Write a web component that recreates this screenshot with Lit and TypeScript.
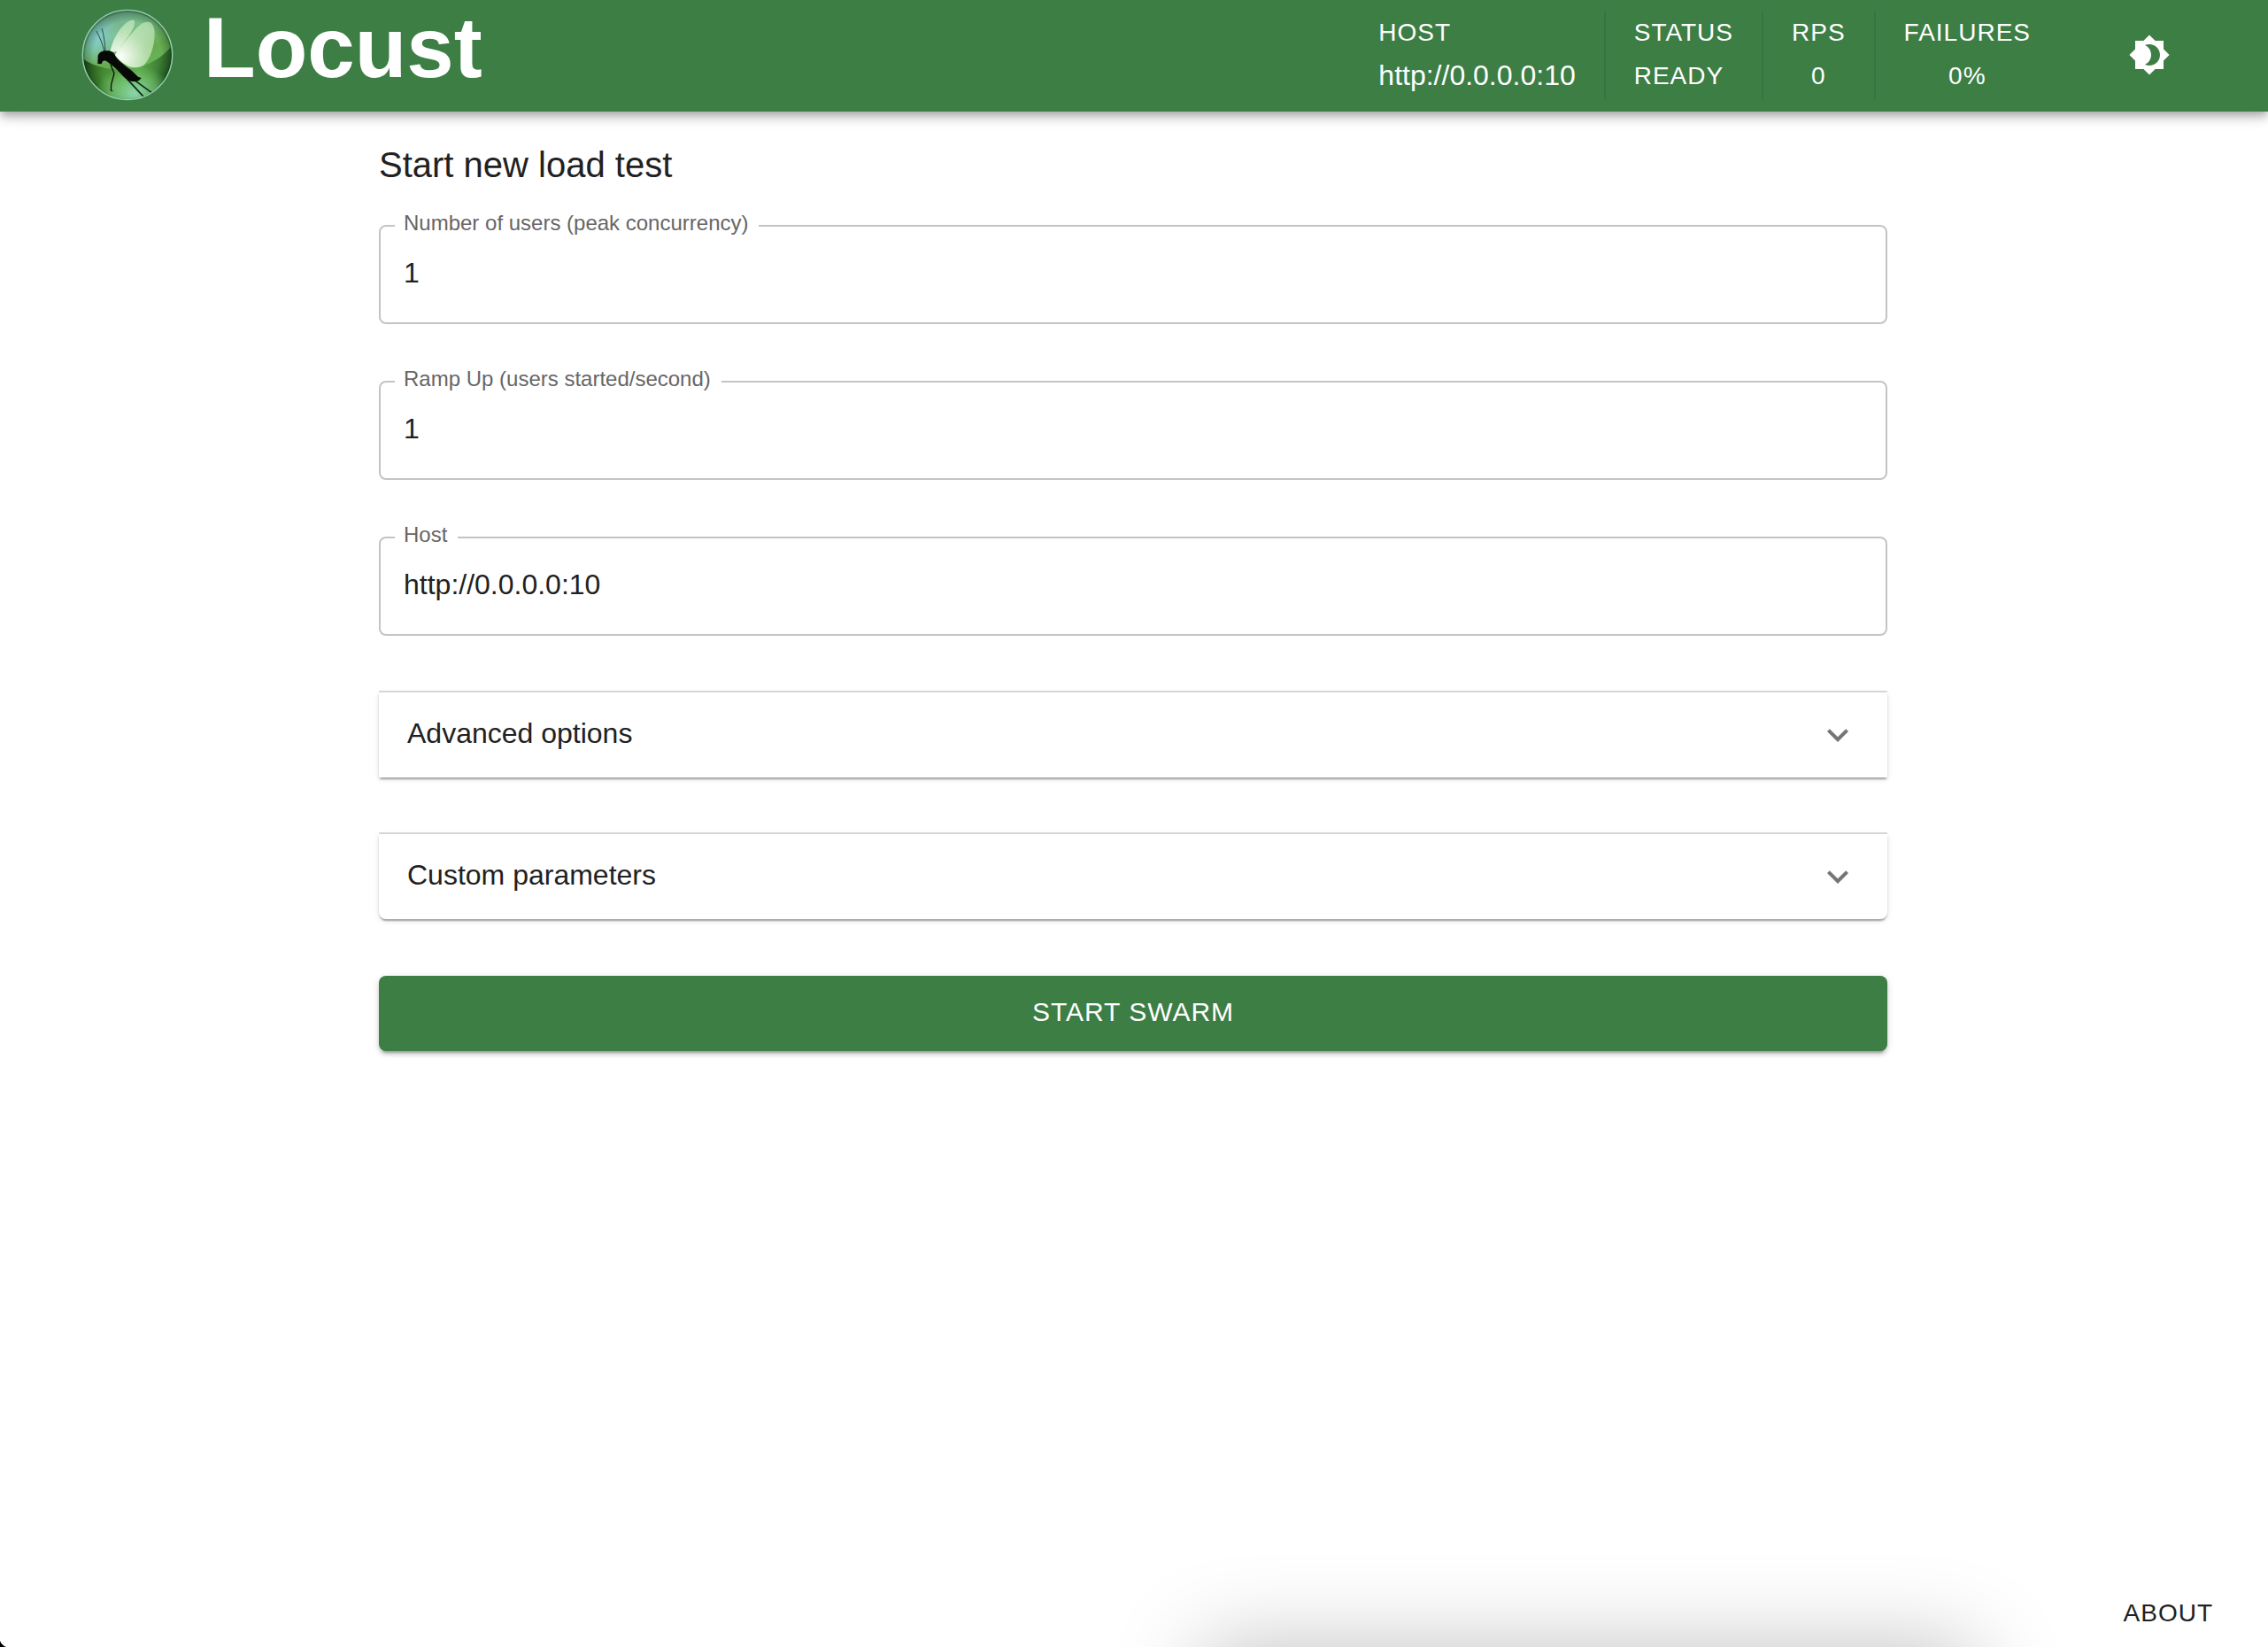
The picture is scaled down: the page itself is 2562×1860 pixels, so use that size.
import { LitElement, css, html, svg } from "lit";
import { customElement, property, state } from "lit/decorators.js";

const FONT = css`"Liberation Sans", Helvetica, Arial, sans-serif`;

/** Round glass badge with the insect silhouette. */
@customElement("locust-logo")
class LocustLogo extends LitElement {
  static styles = css`
    :host {
      display: block;
    }
    .badge {
      display: block;
      width: 104px;
      height: 104px;
    }
  `;

  render() {
    return html`
      <svg class="badge" viewBox="36 29 312 312" role="img" aria-label="Locust logo">
        <defs>
          <linearGradient id="glass" x1="0.2" y1="0" x2="0.6" y2="1">
            <stop offset="0" stop-color="#6fa59b" />
            <stop offset="0.3" stop-color="#7cbf86" />
            <stop offset="0.55" stop-color="#67ab50" />
            <stop offset="1" stop-color="#6cc06a" />
          </linearGradient>
          <radialGradient id="rim" cx="0.5" cy="0.5" r="0.5">
            <stop offset="0.76" stop-color="#0c3a10" stop-opacity="0" />
            <stop offset="0.94" stop-color="#0c3a10" stop-opacity="0.28" />
            <stop offset="1" stop-color="#062408" stop-opacity="0.65" />
          </radialGradient>
          <linearGradient id="lower" x1="0" y1="0.1" x2="1" y2="0.2">
            <stop offset="0" stop-color="#04200a" stop-opacity="0.9" />
            <stop offset="0.3" stop-color="#2a6c18" stop-opacity="0.5" />
            <stop offset="0.65" stop-color="#3f9428" stop-opacity="0.35" />
            <stop offset="1" stop-color="#0b3310" stop-opacity="0.75" />
          </linearGradient>
          <radialGradient id="glow" cx="0.5" cy="0.5" r="0.5">
            <stop offset="0" stop-color="#8ed8ae" stop-opacity="0.95" />
            <stop offset="0.6" stop-color="#78c879" stop-opacity="0.6" />
            <stop offset="1" stop-color="#78c860" stop-opacity="0" />
          </radialGradient>
          <radialGradient id="sheen" cx="0.5" cy="0.5" r="0.5">
            <stop offset="0" stop-color="#84cfd8" stop-opacity="0.85" />
            <stop offset="1" stop-color="#84cfd8" stop-opacity="0" />
          </radialGradient>
          <radialGradient id="wing" gradientUnits="userSpaceOnUse" cx="168" cy="192" r="130">
            <stop offset="0" stop-color="#ffffff" />
            <stop offset="0.22" stop-color="#f2fbee" stop-opacity="0.9" />
            <stop offset="0.7" stop-color="#d3efcb" stop-opacity="0.7" />
            <stop offset="1" stop-color="#cdeec6" stop-opacity="0.62" />
          </radialGradient>
          <clipPath id="disc"><circle cx="192" cy="185" r="150" /></clipPath>
        </defs>
        <circle cx="192" cy="185" r="150" fill="url(#glass)" />
        <g clip-path="url(#disc)">
          <ellipse cx="85" cy="125" rx="90" ry="95" fill="url(#sheen)" />
          <circle cx="192" cy="185" r="151" fill="url(#rim)" />
          <path
            d="M36 195 C90 232 140 236 200 231 C265 224 315 190 345 150 V345 H36 Z"
            fill="url(#lower)"
          />
          <ellipse cx="215" cy="315" rx="130" ry="95" fill="url(#glow)" />
        </g>
        <path
          d="M133 176 C141 128 176 74 207 67 C219 65 219 77 213 91 C200 120 172 151 157 174 Z"
          fill="url(#wing)"
        />
        <path
          d="M156 174 C184 139 217 94 243 78 C265 66 279 77 283 99 C287 134 277 186 252 215 C236 235 201 229 184 217 C169 207 150 190 150 184 Z"
          fill="url(#wing)"
        />
        <g fill="none" stroke="#111" stroke-linecap="round" stroke-linejoin="round">
          <path d="M114 174 C108 148 98 124 87 105" stroke-width="3" stroke="#2d4a42" />
          <path d="M117 174 C116 146 112 120 106 97" stroke-width="3" stroke="#2d4a42" />
          <path d="M135 219 L147 248 L137 285 L136 305 L140 307" stroke-width="4" />
          <path d="M192 268 L247 327" stroke-width="5" stroke="#12261c" />
          <path d="M212 268 L274 313" stroke-width="5" stroke="#12261c" />
        </g>
        <path
          d="M91 215 L92 187 C97 173 112 169 126 171 C137 171 148 178 151 189 C162 207 189 225 207 239 L228 259 L239 263 L232 271 C220 277 206 275 194 271 C177 261 163 240 152 231 C143 221 133 216 124 208 C117 203 110 203 107 208 L104 216 Z"
          fill="#070907"
        />
        <circle cx="192" cy="185" r="152" fill="none" stroke="#98cfb2" stroke-width="4" />
      </svg>
    `;
  }
}

/** Outlined text field with its label set into the top border. */
@customElement("outlined-field")
class OutlinedField extends LitElement {
  @property() label = "";
  @property() value = "";

  static styles = css`
    :host {
      display: block;
    }
    .field {
      position: relative;
      border: 2px solid #c4c4c4;
      border-radius: 8px;
    }
    .caption {
      position: absolute;
      top: -18px;
      left: 16px;
      padding: 0 12px 0 10px;
      background: #fff;
      color: #666;
      font: 24px/28px ${FONT};
    }
    .box {
      display: block;
      box-sizing: border-box;
      width: 100%;
      height: 108px;
      margin: 0;
      padding: 0 26px 4px;
      border: 0;
      border-radius: 8px;
      outline: none;
      background: transparent;
      color: #212121;
      font: 32px/48px ${FONT};
    }
    .field:focus-within {
      border-color: #3d7e45;
    }
  `;

  render() {
    return html`
      <div class="field">
        <label class="caption" for="box">${this.label}</label>
        <input class="box" id="box" type="text" .value=${this.value} />
      </div>
    `;
  }
}

@customElement("app-root")
class AppRoot extends LitElement {
  @state() private expanded = "";

  private stats = [
    { name: "HOST", value: "http://0.0.0.0:10", kind: "url" },
    { name: "STATUS", value: "READY", kind: "left" },
    { name: "RPS", value: "0", kind: "mid" },
    { name: "FAILURES", value: "0%", kind: "mid" },
  ];

  private fields = [
    { label: "Number of users (peak concurrency)", value: "1" },
    { label: "Ramp Up (users started/second)", value: "1" },
    { label: "Host", value: "http://0.0.0.0:10" },
  ];

  static styles = css`
    :host {
      position: relative;
      display: flex;
      flex-direction: column;
      min-height: 100vh;
      background: #fff;
      color: #212121;
      font: 32px/48px ${FONT};
    }
    .bar {
      display: flex;
      align-items: center;
      justify-content: space-between;
      box-sizing: border-box;
      height: 126px;
      padding: 0 94px 2px 92px;
      background: #3d7e45;
      color: #fff;
      box-shadow:
        0 4px 8px -2px rgba(0, 0, 0, 0.2),
        0 8px 10px rgba(0, 0, 0, 0.14),
        0 2px 20px rgba(0, 0, 0, 0.12);
    }
    .brand {
      display: flex;
      align-items: center;
      gap: 34px;
      color: inherit;
      text-decoration: none;
    }
    .name {
      padding-bottom: 16px;
      font-size: 96px;
      line-height: 108px;
      font-weight: 700;
    }
    .tools {
      display: flex;
      align-items: center;
      gap: 62px;
    }
    .stats {
      display: flex;
      margin: 0;
    }
    .stat {
      display: flex;
      flex-direction: column;
      height: 100px;
      padding: 0 32px;
      font-size: 28px;
      line-height: 49px;
      letter-spacing: 1px;
    }
    .stat + .stat {
      border-left: 2px solid #38743f;
    }
    .stat.mid {
      align-items: center;
    }
    .val {
      margin: 0;
    }
    .url .val {
      font-size: 32px;
      letter-spacing: normal;
    }
    .icon-btn {
      display: flex;
      padding: 16px;
      border: 0;
      background: none;
      color: #fff;
      cursor: pointer;
    }
    .icon {
      display: block;
      width: 48px;
      height: 48px;
      fill: currentColor;
    }
    .main {
      display: flex;
      flex-direction: column;
      gap: 64px;
      box-sizing: border-box;
      width: 100%;
      max-width: 1800px;
      margin: 0 auto;
      padding: 28px 49px 32px 47px;
    }
    .head {
      display: flex;
      flex-direction: column;
      gap: 36px;
    }
    .title {
      margin: 0;
      font-size: 40px;
      line-height: 64px;
      font-weight: 400;
    }
    .slots {
      display: flex;
      flex-direction: column;
      gap: 62px;
      margin-top: -2px;
    }
    .slot {
      border-top: 2px solid #dbdbdb;
    }
    .panel {
      background: #fff;
      box-shadow:
        0 4px 2px -2px rgba(0, 0, 0, 0.2),
        0 2px 2px rgba(0, 0, 0, 0.14),
        0 2px 6px rgba(0, 0, 0, 0.12);
    }
    .slot:last-child .panel {
      border-radius: 0 0 8px 8px;
    }
    .toggle {
      display: flex;
      align-items: center;
      justify-content: space-between;
      box-sizing: border-box;
      width: 100%;
      height: 96px;
      padding: 0 32px;
      border: 0;
      background: none;
      color: inherit;
      font: inherit;
      text-align: left;
      cursor: pointer;
    }
    .toggle-text {
      padding-bottom: 4px;
    }
    .toggle .icon {
      color: #757575;
    }
    .detail {
      padding: 16px 32px 32px;
    }
    .start {
      height: 85px;
      padding: 0 44px 4px;
      border: 0;
      border-radius: 8px;
      background: #3d7e45;
      color: #fff;
      font: 30px/52px ${FONT};
      letter-spacing: 1px;
      cursor: pointer;
      box-shadow:
        0 6px 2px -4px rgba(0, 0, 0, 0.2),
        0 4px 4px rgba(0, 0, 0, 0.14),
        0 2px 10px rgba(0, 0, 0, 0.12);
    }
    .foot {
      display: flex;
      justify-content: flex-end;
      margin-top: auto;
      padding: 0 46px 12px;
    }
    .about {
      position: relative;
      z-index: 1;
      padding: 0 16px;
      border: 0;
      background: none;
      color: inherit;
      font: 28px/52px ${FONT};
      letter-spacing: 1px;
      cursor: pointer;
    }
    .below {
      position: absolute;
      right: 0;
      bottom: 0;
      left: 0;
      height: 140px;
      overflow: hidden;
      pointer-events: none;
    }
    .shade {
      position: absolute;
      top: 100%;
      left: 53%;
      right: 13%;
      height: 200px;
      box-shadow: 0 0 100px rgba(0, 0, 0, 0.25);
    }
    .corner {
      position: absolute;
      bottom: 0;
      left: 0;
      display: block;
      width: 7px;
      height: 7px;
    }
  `;

  private icon(d: string) {
    return html`<svg class="icon" viewBox="0 0 24 24" aria-hidden="true">${svg`<path d=${d} />`}</svg>`;
  }

  private panel(title: string) {
    const open = this.expanded === title;
    return html`
      <div class="slot">
        <section class="panel">
          <button
            class="toggle"
            type="button"
            aria-expanded=${open ? "true" : "false"}
            @click=${() => (this.expanded = open ? "" : title)}
          >
            <span class="toggle-text">${title}</span>
            ${this.icon("M16.59 8.59 12 13.17 7.41 8.59 6 10l6 6 6-6z")}
          </button>
          ${open ? html`<div class="detail"></div>` : null}
        </section>
      </div>
    `;
  }

  render() {
    return html`
      <header class="bar">
        <a class="brand" href="#">
          <locust-logo></locust-logo>
          <span class="name">Locust</span>
        </a>
        <div class="tools">
          <dl class="stats">
            ${this.stats.map(
              (s) => html`
                <div class="stat ${s.kind}">
                  <dt class="key">${s.name}</dt>
                  <dd class="val">${s.value}</dd>
                </div>
              `,
            )}
          </dl>
          <button class="icon-btn" type="button" aria-label="Toggle theme">
            ${this.icon(
              "M20 8.69V4h-4.69L12 .69 8.69 4H4v4.69L.69 12 4 15.31V20h4.69L12 23.31 15.31 20H20v-4.69L23.31 12zM12 18c-.89 0-1.74-.2-2.5-.55C11.56 16.5 13 14.42 13 12s-1.44-4.5-3.5-5.45C10.26 6.2 11.11 6 12 6c3.31 0 6 2.69 6 6s-2.69 6-6 6",
            )}
          </button>
        </div>
      </header>

      <main class="main">
        <div class="head">
          <h1 class="title">Start new load test</h1>
          <outlined-field .label=${this.fields[0].label} .value=${this.fields[0].value}></outlined-field>
        </div>
        ${this.fields
          .slice(1)
          .map((f) => html`<outlined-field .label=${f.label} .value=${f.value}></outlined-field>`)}
        <div class="slots">
          ${this.panel("Advanced options")} ${this.panel("Custom parameters")}
        </div>
        <button class="start" type="button">START SWARM</button>
      </main>

      <footer class="foot">
        <button class="about" type="button">ABOUT</button>
      </footer>

      <div class="below" aria-hidden="true">
        <div class="shade"></div>
        <svg class="corner" viewBox="0 0 7 7"><path d="M0 0 C1 3 4 6 7 7 H0 Z" fill="#000" /></svg>
      </div>
    `;
  }
}
